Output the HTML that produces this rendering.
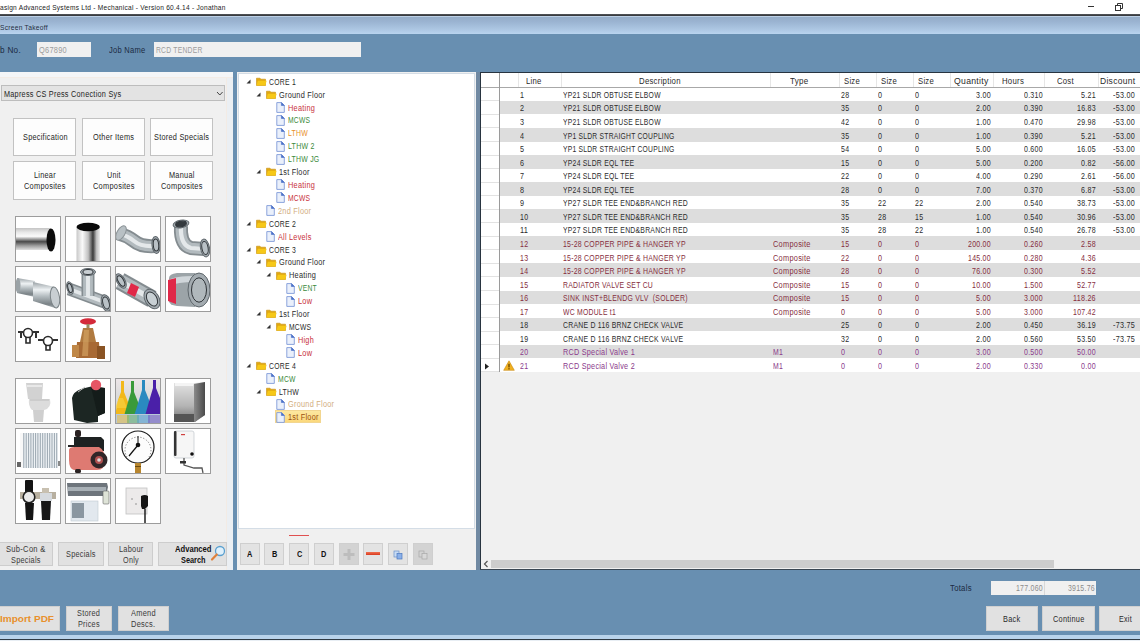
<!DOCTYPE html>
<html><head><meta charset="utf-8"><style>
html,body{margin:0;padding:0;}
body{width:1140px;height:641px;overflow:hidden;position:relative;background:#fff;font-family:"Liberation Sans",sans-serif;}
.t{position:absolute;white-space:pre;line-height:1;transform-origin:0 50%;}
.b{position:absolute;box-sizing:border-box;}
svg{position:absolute;}
</style></head><body>
<div class="b" style="left:0px;top:0px;width:1140px;height:14px;background:#fff"></div>
<div class="t" style="left:-0.50px;top:4.00px;font-size:7.5px;color:#1a1a1a;letter-spacing:0.3px;transform:scaleX(0.876);">asign Advanced Systems Ltd - Mechanical - Version 60.4.14 - Jonathan</div>
<div class="b" style="left:1088px;top:6px;width:6px;height:1px;background:#333"></div>
<svg style="left:1114px;top:2px" width="10" height="10" viewBox="0 0 10 10"><rect x="1.5" y="3.5" width="5" height="5" fill="none" stroke="#333" stroke-width="1"/><path d="M3.5 3.5V1.5H8.5V6.5H6.5" fill="none" stroke="#333" stroke-width="1"/></svg>
<div class="b" style="left:0px;top:14px;width:1140px;height:2px;background:linear-gradient(#55585c,#303236)"></div>
<div class="b" style="left:0px;top:16px;width:1140px;height:18px;background:linear-gradient(#bcd0e6 0px,#bcd0e6 1px,#95adc8 1px,#9bb4d2 6px,#aec8e4 14px,#b9d4ef 18px)"></div>
<div class="t" style="left:-0.50px;top:24.00px;font-size:8px;color:#1f2c40;letter-spacing:0.3px;transform:scaleX(0.834);">Screen Takeoff</div>
<div class="b" style="left:0px;top:34px;width:1140px;height:601px;background:#688fb1"></div>
<div class="b" style="left:0px;top:635px;width:1140px;height:4px;background:#b9d3eb"></div>
<div class="b" style="left:0px;top:639px;width:1140px;height:1px;background:#2f3a44"></div>
<div class="b" style="left:0px;top:640px;width:1140px;height:1px;background:#e8eef4"></div>
<div class="t" style="left:-0.50px;top:46.00px;font-size:8.5px;color:#1b2a42;letter-spacing:0.3px;transform:scaleX(0.962);">b No.</div>
<div class="b" style="left:37px;top:42px;width:54px;height:15px;background:#f0f0f0"></div>
<div class="t" style="left:38.70px;top:46.00px;font-size:8.5px;color:#9c9c9c;letter-spacing:0.3px;transform:scaleX(0.873);">Q67890</div>
<div class="t" style="left:108.70px;top:46.00px;font-size:8.5px;color:#1b2a42;letter-spacing:0.3px;transform:scaleX(0.889);">Job Name</div>
<div class="b" style="left:153.5px;top:42px;width:207.5px;height:15px;background:#f0f0f0"></div>
<div class="t" style="left:155.60px;top:46.00px;font-size:8.5px;color:#9c9c9c;letter-spacing:0.3px;transform:scaleX(0.795);">RCD TENDER</div>
<div class="b" style="left:0px;top:72px;width:233px;height:498px;background:#f0f0f0"></div>
<div class="b" style="left:0px;top:72px;width:233px;height:5px;background:#f4f6f8"></div>
<div class="b" style="left:0px;top:77px;width:233px;height:1px;background:#f3ece6"></div>
<div class="b" style="left:226px;top:78px;width:1px;height:492px;background:#f3ebe4"></div>
<div class="b" style="left:227px;top:78px;width:6px;height:492px;background:#ebeff3"></div>
<div class="b" style="left:1.2px;top:85.2px;width:223.8px;height:15.6px;background:#e3e3e3;border:1px solid #bdbdbd"></div>
<div class="t" style="left:3.60px;top:90.00px;font-size:8.5px;color:#1e1e1e;letter-spacing:0.3px;transform:scaleX(0.856);">Mapress CS Press Conection Sys</div>
<svg style="left:216px;top:90px" width="8" height="7" viewBox="0 0 8 7"><path d="M1 2L3.8 5L6.6 2" fill="none" stroke="#444" stroke-width="1"/></svg>
<div class="b" style="left:13.2px;top:118.1px;width:63px;height:38.3px;background:#fdfdfd;border:1.5px solid #c2c2c2"></div>
<div class="t" style="left:22.64px;top:133.00px;font-size:8.5px;color:#262626;letter-spacing:0.3px;transform:scaleX(0.862);">Specification</div>
<div class="b" style="left:81.6px;top:118.1px;width:63px;height:38.3px;background:#fdfdfd;border:1.5px solid #c2c2c2"></div>
<div class="t" style="left:92.84px;top:133.00px;font-size:8.5px;color:#262626;letter-spacing:0.3px;transform:scaleX(0.865);">Other Items</div>
<div class="b" style="left:150.0px;top:118.1px;width:63px;height:38.3px;background:#fdfdfd;border:1.5px solid #c2c2c2"></div>
<div class="t" style="left:154.27px;top:133.00px;font-size:8.5px;color:#262626;letter-spacing:0.3px;transform:scaleX(0.862);">Stored Specials</div>
<div class="b" style="left:13.2px;top:161.3px;width:63px;height:38.3px;background:#fdfdfd;border:1.5px solid #c2c2c2"></div>
<div class="t" style="left:34.13px;top:171.00px;font-size:8.5px;color:#262626;letter-spacing:0.3px;transform:scaleX(0.861);">Linear</div>
<div class="t" style="left:24.23px;top:182.00px;font-size:8.5px;color:#262626;letter-spacing:0.3px;transform:scaleX(0.871);">Composites</div>
<div class="b" style="left:81.6px;top:161.3px;width:63px;height:38.3px;background:#fdfdfd;border:1.5px solid #c2c2c2"></div>
<div class="t" style="left:106.61px;top:171.00px;font-size:8.5px;color:#262626;letter-spacing:0.3px;transform:scaleX(0.841);">Unit</div>
<div class="t" style="left:92.63px;top:182.00px;font-size:8.5px;color:#262626;letter-spacing:0.3px;transform:scaleX(0.871);">Composites</div>
<div class="b" style="left:150.0px;top:161.3px;width:63px;height:38.3px;background:#fdfdfd;border:1.5px solid #c2c2c2"></div>
<div class="t" style="left:169.07px;top:171.00px;font-size:8.5px;color:#262626;letter-spacing:0.3px;transform:scaleX(0.863);">Manual</div>
<div class="t" style="left:161.03px;top:182.00px;font-size:8.5px;color:#262626;letter-spacing:0.3px;transform:scaleX(0.871);">Composites</div>
<svg width="0" height="0" style="position:absolute"><defs><linearGradient id="mv" x1="0" y1="0" x2="0" y2="1"><stop offset="0" stop-color="#c4c4c4"/><stop offset=".2" stop-color="#e8e8e8"/><stop offset=".38" stop-color="#fafafa"/><stop offset=".62" stop-color="#4a4a4a"/><stop offset=".8" stop-color="#9a9a9a"/><stop offset="1" stop-color="#e0e0e0"/></linearGradient>
<linearGradient id="mh" x1="0" y1="0" x2="1" y2="0"><stop offset="0" stop-color="#c8c8c8"/><stop offset=".25" stop-color="#fafafa"/><stop offset=".5" stop-color="#c0c0c0"/><stop offset=".7" stop-color="#3a3a3a"/><stop offset=".85" stop-color="#bdbdbd"/><stop offset="1" stop-color="#eeeeee"/></linearGradient>
<linearGradient id="mf" x1="0" y1="0" x2="0" y2="1"><stop offset="0" stop-color="#9aa2a6"/><stop offset=".3" stop-color="#eef2f4"/><stop offset=".55" stop-color="#b4bcc0"/><stop offset=".85" stop-color="#7a8286"/><stop offset="1" stop-color="#a8b0b4"/></linearGradient>
<linearGradient id="dw" x1="0" y1="0" x2="0" y2="1"><stop offset="0" stop-color="#e4e4e4"/><stop offset=".6" stop-color="#b4b4b4"/><stop offset="1" stop-color="#707070"/></linearGradient>
<linearGradient id="ds" x1="0" y1="0" x2="1" y2="0"><stop offset="0" stop-color="#8a8a8a"/><stop offset="1" stop-color="#4a4a4a"/></linearGradient>
<linearGradient id="br" x1="0" y1="0" x2="1" y2="0"><stop offset="0" stop-color="#d09058"/><stop offset=".5" stop-color="#a86a34"/><stop offset="1" stop-color="#7a4a20"/></linearGradient>
<linearGradient id="fl" x1="0" y1="0" x2="0" y2="1"><stop offset="0" stop-color="#ece6e8"/><stop offset=".35" stop-color="#dcdcdc"/><stop offset="1" stop-color="#c8d0dc"/></linearGradient></defs></svg>
<div class="b" style="left:15px;top:216px;width:46px;height:46px;background:#fff;border:1px solid #9c9c9c;overflow:hidden"><svg width="44" height="44" viewBox="1 1 44 44" style="left:0;top:0"><rect x="0" y="12" width="36" height="22" fill="url(#mv)"/><ellipse cx="36" cy="24" rx="4.5" ry="11.5" fill="#0c0c0c"/></svg></div>
<div class="b" style="left:65px;top:216px;width:46px;height:46px;background:#fff;border:1px solid #9c9c9c;overflow:hidden"><svg width="44" height="44" viewBox="1 1 44 44" style="left:0;top:0"><rect x="11.5" y="11" width="23.5" height="36" fill="url(#mh)"/><ellipse cx="23.2" cy="11" rx="11.7" ry="4.2" fill="#0a0a0a"/></svg></div>
<div class="b" style="left:115px;top:216px;width:46px;height:46px;background:#fff;border:1px solid #9c9c9c;overflow:hidden"><svg width="44" height="44" viewBox="1 1 44 44" style="left:0;top:0"><path d="M5 18Q13 20 19 25Q26 31 40 30" fill="none" stroke="#848c90" stroke-width="14"/><path d="M5 18Q13 20 19 25Q26 31 40 30" fill="none" stroke="#b2babe" stroke-width="10.5"/><path d="M5 18Q13 20 19 25Q26 31 40 30" fill="none" stroke="#e4e8ea" stroke-width="4.2"/><ellipse cx="6" cy="17" rx="4" ry="8" transform="rotate(30 6 17)" fill="#b8c0c4" stroke="#8a9296"/><ellipse cx="41" cy="29" rx="4" ry="8.5" transform="rotate(-5 41 29)" fill="#a3abb0" stroke="#5f676c" stroke-width="1"/><ellipse cx="41" cy="29" rx="2.7" ry="6.1" transform="rotate(-5 41 29)" fill="#b9c1c6" stroke="#2f3438" stroke-width="1"/></svg></div>
<div class="b" style="left:165px;top:216px;width:46px;height:46px;background:#fff;border:1px solid #9c9c9c;overflow:hidden"><svg width="44" height="44" viewBox="1 1 44 44" style="left:0;top:0"><path d="M16 10Q15 29 26 32L39 33" fill="none" stroke="#848c90" stroke-width="14"/><path d="M16 10Q15 29 26 32L39 33" fill="none" stroke="#b2babe" stroke-width="10.5"/><path d="M16 10Q15 29 26 32L39 33" fill="none" stroke="#e4e8ea" stroke-width="4.2"/><ellipse cx="16" cy="8" rx="8" ry="3.8" transform="rotate(-10 16 8)" fill="#a3abb0" stroke="#5f676c" stroke-width="1"/><ellipse cx="16" cy="8" rx="5.4" ry="2.7" transform="rotate(-10 16 8)" fill="#343a3e" stroke="#2f3438" stroke-width="1"/><ellipse cx="40" cy="32" rx="4.5" ry="9" transform="rotate(-10 40 32)" fill="#a3abb0" stroke="#5f676c" stroke-width="1"/><ellipse cx="40" cy="32" rx="3.1" ry="6.5" transform="rotate(-10 40 32)" fill="#b9c1c6" stroke="#2f3438" stroke-width="1"/></svg></div>
<div class="b" style="left:15px;top:266px;width:46px;height:46px;background:#fff;border:1px solid #9c9c9c;overflow:hidden"><svg width="44" height="44" viewBox="1 1 44 44" style="left:0;top:0"><path d="M2 12L20 15V31L2 27Z" fill="url(#mf)"/><ellipse cx="3" cy="19.5" rx="2.5" ry="7.5" fill="#9aa2a6"/><path d="M18 16L40 21V42L18 35Z" fill="url(#mf)"/><ellipse cx="40" cy="31.5" rx="4.5" ry="10.5" transform="rotate(-8 40 31.5)" fill="#c8ced2" stroke="#7a8286" stroke-width="1"/></svg></div>
<div class="b" style="left:65px;top:266px;width:46px;height:46px;background:#fff;border:1px solid #9c9c9c;overflow:hidden"><svg width="44" height="44" viewBox="1 1 44 44" style="left:0;top:0"><path d="M4 23L42 37" fill="none" stroke="#848c90" stroke-width="13"/><path d="M4 23L42 37" fill="none" stroke="#b2babe" stroke-width="9.8"/><path d="M4 23L42 37" fill="none" stroke="#e4e8ea" stroke-width="3.9"/><path d="M23 6V30" fill="none" stroke="#848c90" stroke-width="13"/><path d="M23 6V30" fill="none" stroke="#b2babe" stroke-width="9.8"/><path d="M23 6V30" fill="none" stroke="#e4e8ea" stroke-width="3.9"/><ellipse cx="23" cy="6" rx="7.5" ry="3.5" transform="rotate(0 23 6)" fill="#a3abb0" stroke="#5f676c" stroke-width="1"/><ellipse cx="23" cy="6" rx="5.1" ry="2.5" transform="rotate(0 23 6)" fill="#c8ced2" stroke="#2f3438" stroke-width="1"/><ellipse cx="41" cy="37" rx="4.5" ry="8.5" transform="rotate(-15 41 37)" fill="#a3abb0" stroke="#5f676c" stroke-width="1"/><ellipse cx="41" cy="37" rx="3.1" ry="6.1" transform="rotate(-15 41 37)" fill="#b9c1c6" stroke="#2f3438" stroke-width="1"/><ellipse cx="5" cy="22" rx="3" ry="6.5" transform="rotate(-15 5 22)" fill="#a3abb0" stroke="#5f676c" stroke-width="1"/><ellipse cx="5" cy="22" rx="2.0" ry="4.7" transform="rotate(-15 5 22)" fill="#b9c1c6" stroke="#2f3438" stroke-width="1"/></svg></div>
<div class="b" style="left:115px;top:266px;width:46px;height:46px;background:#fff;border:1px solid #9c9c9c;overflow:hidden"><svg width="44" height="44" viewBox="1 1 44 44" style="left:0;top:0"><path d="M5 15L37 33" fill="none" stroke="#848c90" stroke-width="18"/><path d="M5 15L37 33" fill="none" stroke="#b2babe" stroke-width="13.5"/><path d="M5 15L37 33" fill="none" stroke="#e4e8ea" stroke-width="5.4"/><path d="M16 17L24 21L20 31L12 27Z" fill="#e02848"/><ellipse cx="37" cy="33" rx="7" ry="10.5" transform="rotate(-30 37 33)" fill="#a3abb0" stroke="#5f676c" stroke-width="1"/><ellipse cx="37" cy="33" rx="4.8" ry="7.6" transform="rotate(-30 37 33)" fill="#c8d0d4" stroke="#2f3438" stroke-width="1"/><ellipse cx="6" cy="15" rx="4" ry="8" transform="rotate(-30 6 15)" fill="#a3abb0" stroke="#5f676c" stroke-width="1"/><ellipse cx="6" cy="15" rx="2.7" ry="5.8" transform="rotate(-30 6 15)" fill="#b9c1c6" stroke="#2f3438" stroke-width="1"/></svg></div>
<div class="b" style="left:165px;top:266px;width:46px;height:46px;background:#fff;border:1px solid #9c9c9c;overflow:hidden"><svg width="44" height="44" viewBox="1 1 44 44" style="left:0;top:0"><path d="M4 12Q4 8 12 7L30 7V41L12 40Q4 39 4 35Z" fill="#9ca4a8"/><path d="M4 14Q10 10 30 10V16Q12 16 4 20Z" fill="#d0d6da"/><path d="M3 14L11 12V38L3 35Z" fill="#e02848"/><ellipse cx="34" cy="24" rx="11" ry="17" transform="rotate(0 34 24)" fill="#a3abb0" stroke="#5f676c" stroke-width="1"/><ellipse cx="34" cy="24" rx="7.5" ry="12.2" transform="rotate(0 34 24)" fill="#b0b8bc" stroke="#2f3438" stroke-width="1"/></svg></div>
<div class="b" style="left:15px;top:316px;width:46px;height:46px;background:#fff;border:1px solid #9c9c9c;overflow:hidden"><svg width="44" height="44" viewBox="1 1 44 44" style="left:0;top:0"><g fill="none" stroke="#2a2a2a" stroke-width="1.6"><circle cx="13" cy="17" r="4.5"/><circle cx="33" cy="25" r="4.5"/><path d="M11 21V27H15V21M31 29V34H35V29"/></g><g fill="#333"><path d="M3 15H9V17H3Z"/><path d="M17 15H24V17H17Z"/><path d="M23 23H29V25H23Z"/><path d="M37 23H43V25H37Z"/><rect x="5" y="16" width="2" height="6"/><rect x="20" y="16" width="2" height="6"/></g></svg></div>
<div class="b" style="left:65px;top:316px;width:46px;height:46px;background:#fff;border:1px solid #9c9c9c;overflow:hidden"><svg width="44" height="44" viewBox="1 1 44 44" style="left:0;top:0"><ellipse cx="23" cy="5.5" rx="8" ry="3.2" fill="#d42a3a"/><rect x="21.5" y="8" width="3" height="5" fill="#9a8a60"/><path d="M18 12H28L31 26H15Z" fill="#b07a40"/><path d="M12 26H34L35 42H11Z" fill="#a86a34"/><path d="M7 29H14V41H7Z" fill="#c08848"/><path d="M32 30H40V43H32Z" fill="#8a5424"/><path d="M19 14H24L23 40H17Z" fill="#d8a868" opacity=".6"/></svg></div>
<div class="b" style="left:15px;top:378px;width:46px;height:46px;background:#fff;border:1px solid #9c9c9c;overflow:hidden"><svg width="44" height="44" viewBox="1 1 44 44" style="left:0;top:0"><path d="M11 5H28L27 21H13Z" fill="#d2d2d2"/><path d="M12 7H27V9H12Z" fill="#e8e8e8"/><path d="M14 21H35Q37 30 29 32H17Q13 28 14 21Z" fill="#dcdcdc"/><path d="M15 22H34" stroke="#bcbcbc" stroke-width="1"/><path d="M18 32H29L28 44H19Z" fill="#cfcfcf"/></svg></div>
<div class="b" style="left:65px;top:378px;width:46px;height:46px;background:#fff;border:1px solid #9c9c9c;overflow:hidden"><svg width="44" height="44" viewBox="1 1 44 44" style="left:0;top:0"><path d="M7 20Q8 14 16 11L28 8L40 10V35L33 38V44L22 45L9 42Z" fill="#1c2623"/><path d="M26 9L40 10V35L33 38Z" fill="#141c1a"/><circle cx="31" cy="7" r="5.2" fill="#e55565"/><path d="M13 14L20 9" stroke="#bbb" stroke-width="1"/></svg></div>
<div class="b" style="left:115px;top:378px;width:46px;height:46px;background:#fff;border:1px solid #9c9c9c;overflow:hidden"><svg width="44" height="44" viewBox="1 1 44 44" style="left:0;top:0"><rect x="1" y="1" width="45" height="45" fill="url(#fl)"/><path d="M0 38L3 22L6 14V3H9V14L13 24L15 38Z" fill="#f2b81a"/><path d="M0 30L4 20H8L12 30Z" fill="#f8d040" opacity=".7"/><path d="M9 38L13 24L16 14V3H19V14L23 24L26 38Z" fill="#3a9a3a"/><path d="M19 38L24 22L27 12V2H30V12L34 22L37 38Z" fill="#2a8ac0"/><path d="M30 38L35 20L38 10V2H41V10L45 20V38Z" fill="#4a20a8"/><rect x="0" y="36" width="46" height="10" fill="#b8c8d8"/><path d="M2 37H14V45H2Z" fill="#e8c050" opacity=".6"/><path d="M12 37H24V45H12Z" fill="#60b060" opacity=".5"/><path d="M22 37H35V45H22Z" fill="#50a0d0" opacity=".5"/><path d="M33 37H46V45H33Z" fill="#7050c0" opacity=".5"/></svg></div>
<div class="b" style="left:165px;top:378px;width:46px;height:46px;background:#fff;border:1px solid #9c9c9c;overflow:hidden"><svg width="44" height="44" viewBox="1 1 44 44" style="left:0;top:0"><path d="M9 5H30L40 4V37L30 44H9Z" fill="url(#dw)"/><path d="M29 6L40 4V37L29 44Z" fill="url(#ds)"/><rect x="9" y="36" width="20" height="8" fill="#555"/><path d="M10 5H29L28 8H10Z" fill="#f4f4f4"/></svg></div>
<div class="b" style="left:15px;top:428px;width:46px;height:46px;background:#fff;border:1px solid #9c9c9c;overflow:hidden"><svg width="44" height="44" viewBox="1 1 44 44" style="left:0;top:0"><rect x="5" y="5" width="38" height="35" fill="#eef2f5"/><rect x="6.0" y="5" width="1" height="35" fill="#9aa6b0"/><rect x="8.3" y="5" width="1" height="35" fill="#9aa6b0"/><rect x="10.7" y="5" width="1" height="35" fill="#9aa6b0"/><rect x="13.1" y="5" width="1" height="35" fill="#9aa6b0"/><rect x="15.4" y="5" width="1" height="35" fill="#9aa6b0"/><rect x="17.8" y="5" width="1" height="35" fill="#9aa6b0"/><rect x="20.1" y="5" width="1" height="35" fill="#9aa6b0"/><rect x="22.4" y="5" width="1" height="35" fill="#9aa6b0"/><rect x="24.8" y="5" width="1" height="35" fill="#9aa6b0"/><rect x="27.2" y="5" width="1" height="35" fill="#9aa6b0"/><rect x="29.5" y="5" width="1" height="35" fill="#9aa6b0"/><rect x="31.9" y="5" width="1" height="35" fill="#9aa6b0"/><rect x="34.2" y="5" width="1" height="35" fill="#9aa6b0"/><rect x="36.5" y="5" width="1" height="35" fill="#9aa6b0"/><rect x="38.9" y="5" width="1" height="35" fill="#9aa6b0"/><rect x="41.2" y="5" width="1" height="35" fill="#9aa6b0"/><rect x="5" y="5" width="3" height="35" fill="#f8f8f8"/><rect x="2" y="34" width="4" height="5" fill="#666"/><rect x="43" y="33" width="2" height="5" fill="#888"/></svg></div>
<div class="b" style="left:65px;top:428px;width:46px;height:46px;background:#fff;border:1px solid #9c9c9c;overflow:hidden"><svg width="44" height="44" viewBox="1 1 44 44" style="left:0;top:0"><rect x="10" y="2" width="6" height="7" rx="2" fill="#2a2222"/><path d="M9 9H36L39 12V23H9Z" fill="#1e2222"/><path d="M3 17H12V19H3Z" fill="#222"/><path d="M4 22Q4 19 10 19H34Q40 22 40 32Q40 42 32 42H9Q4 41 4 32Z" fill="#de7a72"/><circle cx="34" cy="32" r="8.5" fill="#302628"/><circle cx="34" cy="32" r="4" fill="#b05050"/><circle cx="34" cy="32" r="1.8" fill="#ddd"/><rect x="10" y="41" width="6" height="4" rx="1.5" fill="#2a2222"/></svg></div>
<div class="b" style="left:115px;top:428px;width:46px;height:46px;background:#fff;border:1px solid #9c9c9c;overflow:hidden"><svg width="44" height="44" viewBox="1 1 44 44" style="left:0;top:0"><circle cx="23" cy="19" r="16" fill="#fcfcfc" stroke="#1a1a1a" stroke-width="1.2"/><g stroke="#444" stroke-width=".8" fill="none"><path d="M12 29A13 13 0 1 1 34 29" stroke-dasharray="1 2"/></g><path d="M23 17L14 28" stroke="#111" stroke-width="1.2"/><path d="M23 17V8" stroke="#111" stroke-width="1"/><circle cx="23" cy="17" r="2.3" fill="#111"/><rect x="20" y="35" width="6" height="10" fill="#b8862e"/><rect x="20" y="38" width="6" height="1" fill="#6a4a10"/></svg></div>
<div class="b" style="left:165px;top:428px;width:46px;height:46px;background:#fff;border:1px solid #9c9c9c;overflow:hidden"><svg width="44" height="44" viewBox="1 1 44 44" style="left:0;top:0"><rect x="9" y="3" width="20" height="27" rx="2" fill="#f6f6f6" stroke="#c8cdd2" stroke-width=".8"/><rect x="9" y="3" width="2.5" height="25" rx="1" fill="#333"/><circle cx="27" cy="26" r="1.8" fill="#111"/><rect x="16" y="6" width="4" height="1.2" fill="#d04040"/><path d="M19 30V37L29 40H37L38 45" fill="none" stroke="#555" stroke-width="1.3"/><rect x="15" y="33" width="6" height="2.5" fill="#333"/></svg></div>
<div class="b" style="left:15px;top:478px;width:46px;height:46px;background:#fff;border:1px solid #9c9c9c;overflow:hidden"><svg width="44" height="44" viewBox="1 1 44 44" style="left:0;top:0"><rect x="5" y="14" width="36" height="7" fill="#b8b0a0"/><rect x="10" y="2" width="8" height="14" rx="1" fill="#141414"/><circle cx="14" cy="19" r="5.8" fill="#eaeaea" stroke="#222" stroke-width="1.6"/><path d="M10 25H19L18 42H11Z" fill="#141414"/><rect x="27" y="10" width="7" height="6" fill="#c8c0b0"/><rect x="25" y="15" width="12" height="8" fill="#d6dade"/><path d="M26 23H36L35 42H27Z" fill="#161616"/></svg></div>
<div class="b" style="left:65px;top:478px;width:46px;height:46px;background:#fff;border:1px solid #9c9c9c;overflow:hidden"><svg width="44" height="44" viewBox="1 1 44 44" style="left:0;top:0"><path d="M2 5H42L43 9L41 18H3Z" fill="#6e757c"/><rect x="3" y="9" width="38" height="4" fill="#a8b0b6"/><rect x="38" y="13" width="6" height="13" rx="1" fill="#dfe4d8" stroke="#666" stroke-width=".6"/><rect x="6" y="23" width="27" height="20" fill="#e2e8ee" stroke="#c0c8d0" stroke-width=".6"/><rect x="7" y="25" width="12" height="15" fill="#8a96a0"/></svg></div>
<div class="b" style="left:115px;top:478px;width:46px;height:46px;background:#fff;border:1px solid #9c9c9c;overflow:hidden"><svg width="44" height="44" viewBox="1 1 44 44" style="left:0;top:0"><rect x="11" y="10" width="21" height="26" fill="#eceaea" stroke="#c0c0c0" stroke-width=".8"/><path d="M26 18Q30 16 33 18V28L30 31H27L26 28Z" fill="#151515"/><path d="M30 31V46" stroke="#111" stroke-width="1.4"/><circle cx="17" cy="21" r=".8" fill="#888"/><circle cx="21" cy="26" r=".8" fill="#888"/></svg></div>
<div class="b" style="left:-2px;top:542.3px;width:54.6px;height:24.2px;background:#e1e1e1;border:1px solid #cdcdcd"></div>
<div class="t" style="left:5.65px;top:545.00px;font-size:8.5px;color:#3a3a3a;letter-spacing:0.3px;transform:scaleX(0.894);">Sub-Con &amp;</div>
<div class="t" style="left:10.54px;top:556.00px;font-size:8.5px;color:#3a3a3a;letter-spacing:0.3px;transform:scaleX(0.862);">Specials</div>
<div class="b" style="left:58.3px;top:542.3px;width:45.3px;height:24.2px;background:#e1e1e1;border:1px solid #cdcdcd"></div>
<div class="t" style="left:66.19px;top:550.00px;font-size:8.5px;color:#3a3a3a;letter-spacing:0.3px;transform:scaleX(0.862);">Specials</div>
<div class="b" style="left:108.4px;top:542.3px;width:45px;height:24.2px;background:#e1e1e1;border:1px solid #cdcdcd"></div>
<div class="t" style="left:118.75px;top:545.00px;font-size:8.5px;color:#3a3a3a;letter-spacing:0.3px;transform:scaleX(0.869);">Labour</div>
<div class="t" style="left:123.08px;top:556.00px;font-size:8.5px;color:#3a3a3a;letter-spacing:0.3px;transform:scaleX(0.851);">Only</div>
<div class="b" style="left:158.3px;top:542.3px;width:69px;height:24.2px;background:#e1e1e1;border:1px solid #cdcdcd"></div>
<div class="t" style="left:174.75px;top:545.00px;font-size:8.5px;color:#111;font-weight:bold;transform:scaleX(0.899);">Advanced</div>
<div class="t" style="left:180.75px;top:556.00px;font-size:8.5px;color:#111;font-weight:bold;transform:scaleX(0.864);">Search</div>
<svg style="left:209px;top:543px" width="18" height="20" viewBox="0 0 18 20"><circle cx="11" cy="8" r="4.5" fill="#dff0fb" stroke="#5aa0d0" stroke-width="1.3"/><path d="M7.8 11.5L3 16.5" stroke="#e0803a" stroke-width="2.2" stroke-linecap="round"/></svg>
<div class="b" style="left:237px;top:72px;width:239px;height:498px;background:#f0f0f0"></div>
<div class="b" style="left:238px;top:73px;width:237px;height:456px;background:#fff;border:1px solid #d4dde6"></div>
<svg style="left:245.5px;top:78.7px" width="5" height="5" viewBox="0 0 5 5"><path d="M4.5 0.5V4.5H0.5Z" fill="#333"/></svg>
<svg style="left:256px;top:77.0px" width="11" height="9" viewBox="0 0 11 9"><path d="M0.5 1.2H4L5 2.2H9.5V8.5H0.5Z" fill="#e0a810" stroke="#c89010" stroke-width=".6"/><path d="M1.8 3.8H10.6L9.4 8.5H0.5Z" fill="#f6c818"/></svg>
<div class="t" style="left:268.50px;top:78.00px;font-size:8.5px;color:#2a2a2a;letter-spacing:0.3px;transform:scaleX(0.806);">CORE 1</div>
<svg style="left:255.5px;top:91.61px" width="5" height="5" viewBox="0 0 5 5"><path d="M4.5 0.5V4.5H0.5Z" fill="#333"/></svg>
<svg style="left:266px;top:89.91px" width="11" height="9" viewBox="0 0 11 9"><path d="M0.5 1.2H4L5 2.2H9.5V8.5H0.5Z" fill="#e0a810" stroke="#c89010" stroke-width=".6"/><path d="M1.8 3.8H10.6L9.4 8.5H0.5Z" fill="#f6c818"/></svg>
<div class="t" style="left:278.50px;top:91.00px;font-size:8.5px;color:#2a2a2a;letter-spacing:0.3px;transform:scaleX(0.862);">Ground Floor</div>
<svg style="left:276px;top:101.92px" width="9" height="11" viewBox="0 0 9 11"><path d="M0.8 0.6H5.6L8.3 3.3V10.4H0.8Z" fill="#eaf0fb" stroke="#7f9ad8" stroke-width=".9"/><path d="M5.4 0.6V3.5H8.3Z" fill="#4a70c8" stroke="#4a70c8" stroke-width=".6"/></svg>
<div class="t" style="left:288.30px;top:104.00px;font-size:8.5px;color:#c8303c;letter-spacing:0.3px;transform:scaleX(0.862);">Heating</div>
<svg style="left:276px;top:114.83px" width="9" height="11" viewBox="0 0 9 11"><path d="M0.8 0.6H5.6L8.3 3.3V10.4H0.8Z" fill="#eaf0fb" stroke="#7f9ad8" stroke-width=".9"/><path d="M5.4 0.6V3.5H8.3Z" fill="#4a70c8" stroke="#4a70c8" stroke-width=".6"/></svg>
<div class="t" style="left:288.30px;top:116.00px;font-size:8.5px;color:#3a8a3a;letter-spacing:0.3px;transform:scaleX(0.793);">MCWS</div>
<svg style="left:276px;top:127.74px" width="9" height="11" viewBox="0 0 9 11"><path d="M0.8 0.6H5.6L8.3 3.3V10.4H0.8Z" fill="#eaf0fb" stroke="#7f9ad8" stroke-width=".9"/><path d="M5.4 0.6V3.5H8.3Z" fill="#4a70c8" stroke="#4a70c8" stroke-width=".6"/></svg>
<div class="t" style="left:288.30px;top:129.00px;font-size:8.5px;color:#e8902a;letter-spacing:0.3px;transform:scaleX(0.811);">LTHW</div>
<svg style="left:276px;top:140.65px" width="9" height="11" viewBox="0 0 9 11"><path d="M0.8 0.6H5.6L8.3 3.3V10.4H0.8Z" fill="#eaf0fb" stroke="#7f9ad8" stroke-width=".9"/><path d="M5.4 0.6V3.5H8.3Z" fill="#4a70c8" stroke="#4a70c8" stroke-width=".6"/></svg>
<div class="t" style="left:288.30px;top:142.00px;font-size:8.5px;color:#3a8a3a;letter-spacing:0.3px;transform:scaleX(0.822);">LTHW 2</div>
<svg style="left:276px;top:153.56px" width="9" height="11" viewBox="0 0 9 11"><path d="M0.8 0.6H5.6L8.3 3.3V10.4H0.8Z" fill="#eaf0fb" stroke="#7f9ad8" stroke-width=".9"/><path d="M5.4 0.6V3.5H8.3Z" fill="#4a70c8" stroke="#4a70c8" stroke-width=".6"/></svg>
<div class="t" style="left:288.30px;top:155.00px;font-size:8.5px;color:#3a8a3a;letter-spacing:0.3px;transform:scaleX(0.812);">LTHW JG</div>
<svg style="left:255.5px;top:169.07000000000002px" width="5" height="5" viewBox="0 0 5 5"><path d="M4.5 0.5V4.5H0.5Z" fill="#333"/></svg>
<svg style="left:266px;top:167.37px" width="11" height="9" viewBox="0 0 11 9"><path d="M0.5 1.2H4L5 2.2H9.5V8.5H0.5Z" fill="#e0a810" stroke="#c89010" stroke-width=".6"/><path d="M1.8 3.8H10.6L9.4 8.5H0.5Z" fill="#f6c818"/></svg>
<div class="t" style="left:278.50px;top:168.00px;font-size:8.5px;color:#2a2a2a;letter-spacing:0.3px;transform:scaleX(0.856);">1st Floor</div>
<svg style="left:276px;top:179.38px" width="9" height="11" viewBox="0 0 9 11"><path d="M0.8 0.6H5.6L8.3 3.3V10.4H0.8Z" fill="#eaf0fb" stroke="#7f9ad8" stroke-width=".9"/><path d="M5.4 0.6V3.5H8.3Z" fill="#4a70c8" stroke="#4a70c8" stroke-width=".6"/></svg>
<div class="t" style="left:288.30px;top:181.00px;font-size:8.5px;color:#c8303c;letter-spacing:0.3px;transform:scaleX(0.862);">Heating</div>
<svg style="left:276px;top:192.29000000000002px" width="9" height="11" viewBox="0 0 9 11"><path d="M0.8 0.6H5.6L8.3 3.3V10.4H0.8Z" fill="#eaf0fb" stroke="#7f9ad8" stroke-width=".9"/><path d="M5.4 0.6V3.5H8.3Z" fill="#4a70c8" stroke="#4a70c8" stroke-width=".6"/></svg>
<div class="t" style="left:288.30px;top:194.00px;font-size:8.5px;color:#c8303c;letter-spacing:0.3px;transform:scaleX(0.793);">MCWS</div>
<svg style="left:266px;top:205.2px" width="9" height="11" viewBox="0 0 9 11"><path d="M0.8 0.6H5.6L8.3 3.3V10.4H0.8Z" fill="#eaf0fb" stroke="#7f9ad8" stroke-width=".9"/><path d="M5.4 0.6V3.5H8.3Z" fill="#4a70c8" stroke="#4a70c8" stroke-width=".6"/></svg>
<div class="t" style="left:278.30px;top:207.00px;font-size:8.5px;color:#d2ae80;letter-spacing:0.3px;transform:scaleX(0.863);">2nd Floor</div>
<svg style="left:245.5px;top:220.71px" width="5" height="5" viewBox="0 0 5 5"><path d="M4.5 0.5V4.5H0.5Z" fill="#333"/></svg>
<svg style="left:256px;top:219.01px" width="11" height="9" viewBox="0 0 11 9"><path d="M0.5 1.2H4L5 2.2H9.5V8.5H0.5Z" fill="#e0a810" stroke="#c89010" stroke-width=".6"/><path d="M1.8 3.8H10.6L9.4 8.5H0.5Z" fill="#f6c818"/></svg>
<div class="t" style="left:268.50px;top:220.00px;font-size:8.5px;color:#2a2a2a;letter-spacing:0.3px;transform:scaleX(0.806);">CORE 2</div>
<svg style="left:266px;top:231.02000000000004px" width="9" height="11" viewBox="0 0 9 11"><path d="M0.8 0.6H5.6L8.3 3.3V10.4H0.8Z" fill="#eaf0fb" stroke="#7f9ad8" stroke-width=".9"/><path d="M5.4 0.6V3.5H8.3Z" fill="#4a70c8" stroke="#4a70c8" stroke-width=".6"/></svg>
<div class="t" style="left:278.30px;top:233.00px;font-size:8.5px;color:#c8303c;letter-spacing:0.3px;transform:scaleX(0.852);">All Levels</div>
<svg style="left:245.5px;top:246.53px" width="5" height="5" viewBox="0 0 5 5"><path d="M4.5 0.5V4.5H0.5Z" fill="#333"/></svg>
<svg style="left:256px;top:244.82999999999998px" width="11" height="9" viewBox="0 0 11 9"><path d="M0.5 1.2H4L5 2.2H9.5V8.5H0.5Z" fill="#e0a810" stroke="#c89010" stroke-width=".6"/><path d="M1.8 3.8H10.6L9.4 8.5H0.5Z" fill="#f6c818"/></svg>
<div class="t" style="left:268.50px;top:246.00px;font-size:8.5px;color:#2a2a2a;letter-spacing:0.3px;transform:scaleX(0.806);">CORE 3</div>
<svg style="left:255.5px;top:259.44px" width="5" height="5" viewBox="0 0 5 5"><path d="M4.5 0.5V4.5H0.5Z" fill="#333"/></svg>
<svg style="left:266px;top:257.74px" width="11" height="9" viewBox="0 0 11 9"><path d="M0.5 1.2H4L5 2.2H9.5V8.5H0.5Z" fill="#e0a810" stroke="#c89010" stroke-width=".6"/><path d="M1.8 3.8H10.6L9.4 8.5H0.5Z" fill="#f6c818"/></svg>
<div class="t" style="left:278.50px;top:258.00px;font-size:8.5px;color:#2a2a2a;letter-spacing:0.3px;transform:scaleX(0.862);">Ground Floor</div>
<svg style="left:265.5px;top:272.34999999999997px" width="5" height="5" viewBox="0 0 5 5"><path d="M4.5 0.5V4.5H0.5Z" fill="#333"/></svg>
<svg style="left:276px;top:270.65px" width="11" height="9" viewBox="0 0 11 9"><path d="M0.5 1.2H4L5 2.2H9.5V8.5H0.5Z" fill="#e0a810" stroke="#c89010" stroke-width=".6"/><path d="M1.8 3.8H10.6L9.4 8.5H0.5Z" fill="#f6c818"/></svg>
<div class="t" style="left:288.50px;top:271.00px;font-size:8.5px;color:#2a2a2a;letter-spacing:0.3px;transform:scaleX(0.862);">Heating</div>
<svg style="left:286px;top:282.66px" width="9" height="11" viewBox="0 0 9 11"><path d="M0.8 0.6H5.6L8.3 3.3V10.4H0.8Z" fill="#eaf0fb" stroke="#7f9ad8" stroke-width=".9"/><path d="M5.4 0.6V3.5H8.3Z" fill="#4a70c8" stroke="#4a70c8" stroke-width=".6"/></svg>
<div class="t" style="left:298.30px;top:284.00px;font-size:8.5px;color:#3a8a3a;letter-spacing:0.3px;transform:scaleX(0.789);">VENT</div>
<svg style="left:286px;top:295.57px" width="9" height="11" viewBox="0 0 9 11"><path d="M0.8 0.6H5.6L8.3 3.3V10.4H0.8Z" fill="#eaf0fb" stroke="#7f9ad8" stroke-width=".9"/><path d="M5.4 0.6V3.5H8.3Z" fill="#4a70c8" stroke="#4a70c8" stroke-width=".6"/></svg>
<div class="t" style="left:298.30px;top:297.00px;font-size:8.5px;color:#c8303c;letter-spacing:0.3px;transform:scaleX(0.870);">Low</div>
<svg style="left:255.5px;top:311.08px" width="5" height="5" viewBox="0 0 5 5"><path d="M4.5 0.5V4.5H0.5Z" fill="#333"/></svg>
<svg style="left:266px;top:309.38px" width="11" height="9" viewBox="0 0 11 9"><path d="M0.5 1.2H4L5 2.2H9.5V8.5H0.5Z" fill="#e0a810" stroke="#c89010" stroke-width=".6"/><path d="M1.8 3.8H10.6L9.4 8.5H0.5Z" fill="#f6c818"/></svg>
<div class="t" style="left:278.50px;top:310.00px;font-size:8.5px;color:#2a2a2a;letter-spacing:0.3px;transform:scaleX(0.856);">1st Floor</div>
<svg style="left:265.5px;top:323.98999999999995px" width="5" height="5" viewBox="0 0 5 5"><path d="M4.5 0.5V4.5H0.5Z" fill="#333"/></svg>
<svg style="left:276px;top:322.28999999999996px" width="11" height="9" viewBox="0 0 11 9"><path d="M0.5 1.2H4L5 2.2H9.5V8.5H0.5Z" fill="#e0a810" stroke="#c89010" stroke-width=".6"/><path d="M1.8 3.8H10.6L9.4 8.5H0.5Z" fill="#f6c818"/></svg>
<div class="t" style="left:288.50px;top:323.00px;font-size:8.5px;color:#2a2a2a;letter-spacing:0.3px;transform:scaleX(0.793);">MCWS</div>
<svg style="left:286px;top:334.3px" width="9" height="11" viewBox="0 0 9 11"><path d="M0.8 0.6H5.6L8.3 3.3V10.4H0.8Z" fill="#eaf0fb" stroke="#7f9ad8" stroke-width=".9"/><path d="M5.4 0.6V3.5H8.3Z" fill="#4a70c8" stroke="#4a70c8" stroke-width=".6"/></svg>
<div class="t" style="left:298.30px;top:336.00px;font-size:8.5px;color:#c8303c;letter-spacing:0.3px;transform:scaleX(0.854);">High</div>
<svg style="left:286px;top:347.21000000000004px" width="9" height="11" viewBox="0 0 9 11"><path d="M0.8 0.6H5.6L8.3 3.3V10.4H0.8Z" fill="#eaf0fb" stroke="#7f9ad8" stroke-width=".9"/><path d="M5.4 0.6V3.5H8.3Z" fill="#4a70c8" stroke="#4a70c8" stroke-width=".6"/></svg>
<div class="t" style="left:298.30px;top:349.00px;font-size:8.5px;color:#c8303c;letter-spacing:0.3px;transform:scaleX(0.870);">Low</div>
<svg style="left:245.5px;top:362.71999999999997px" width="5" height="5" viewBox="0 0 5 5"><path d="M4.5 0.5V4.5H0.5Z" fill="#333"/></svg>
<svg style="left:256px;top:361.02px" width="11" height="9" viewBox="0 0 11 9"><path d="M0.5 1.2H4L5 2.2H9.5V8.5H0.5Z" fill="#e0a810" stroke="#c89010" stroke-width=".6"/><path d="M1.8 3.8H10.6L9.4 8.5H0.5Z" fill="#f6c818"/></svg>
<div class="t" style="left:268.50px;top:362.00px;font-size:8.5px;color:#2a2a2a;letter-spacing:0.3px;transform:scaleX(0.806);">CORE 4</div>
<svg style="left:266px;top:373.03000000000003px" width="9" height="11" viewBox="0 0 9 11"><path d="M0.8 0.6H5.6L8.3 3.3V10.4H0.8Z" fill="#eaf0fb" stroke="#7f9ad8" stroke-width=".9"/><path d="M5.4 0.6V3.5H8.3Z" fill="#4a70c8" stroke="#4a70c8" stroke-width=".6"/></svg>
<div class="t" style="left:278.30px;top:375.00px;font-size:8.5px;color:#3a8a3a;letter-spacing:0.3px;transform:scaleX(0.797);">MCW</div>
<svg style="left:255.5px;top:388.54px" width="5" height="5" viewBox="0 0 5 5"><path d="M4.5 0.5V4.5H0.5Z" fill="#333"/></svg>
<svg style="left:266px;top:386.84000000000003px" width="11" height="9" viewBox="0 0 11 9"><path d="M0.5 1.2H4L5 2.2H9.5V8.5H0.5Z" fill="#e0a810" stroke="#c89010" stroke-width=".6"/><path d="M1.8 3.8H10.6L9.4 8.5H0.5Z" fill="#f6c818"/></svg>
<div class="t" style="left:278.50px;top:388.00px;font-size:8.5px;color:#2a2a2a;letter-spacing:0.3px;transform:scaleX(0.811);">LTHW</div>
<svg style="left:276px;top:398.85px" width="9" height="11" viewBox="0 0 9 11"><path d="M0.8 0.6H5.6L8.3 3.3V10.4H0.8Z" fill="#eaf0fb" stroke="#7f9ad8" stroke-width=".9"/><path d="M5.4 0.6V3.5H8.3Z" fill="#4a70c8" stroke="#4a70c8" stroke-width=".6"/></svg>
<div class="t" style="left:288.30px;top:400.00px;font-size:8.5px;color:#d2ae80;letter-spacing:0.3px;transform:scaleX(0.862);">Ground Floor</div>
<div class="b" style="left:275px;top:409.96000000000004px;width:46px;height:13.2px;background:linear-gradient(#fde8a0,#fbd87c);border:1px solid #f2d690"></div>
<svg style="left:276px;top:411.76000000000005px" width="9" height="11" viewBox="0 0 9 11"><path d="M0.8 0.6H5.6L8.3 3.3V10.4H0.8Z" fill="#eaf0fb" stroke="#7f9ad8" stroke-width=".9"/><path d="M5.4 0.6V3.5H8.3Z" fill="#4a70c8" stroke="#4a70c8" stroke-width=".6"/></svg>
<div class="t" style="left:288.30px;top:413.00px;font-size:8.5px;color:#9a5010;letter-spacing:0.3px;transform:scaleX(0.856);">1st Floor</div>
<div class="b" style="left:289px;top:535px;width:20px;height:1px;background:#e05050"></div>
<div class="b" style="left:239.9px;top:542.8px;width:20px;height:22.7px;background:#e3e3e3;border:1px solid #cfcfcf"></div>
<div class="t" style="left:247.24px;top:550.00px;font-size:9px;color:#111;font-weight:bold;transform:scaleX(0.820);">A</div>
<div class="b" style="left:264.2px;top:542.8px;width:20px;height:22.7px;background:#e3e3e3;border:1px solid #cfcfcf"></div>
<div class="t" style="left:271.54px;top:550.00px;font-size:9px;color:#111;font-weight:bold;transform:scaleX(0.820);">B</div>
<div class="b" style="left:289.2px;top:542.8px;width:20px;height:22.7px;background:#e3e3e3;border:1px solid #cfcfcf"></div>
<div class="t" style="left:296.54px;top:550.00px;font-size:9px;color:#111;font-weight:bold;transform:scaleX(0.820);">C</div>
<div class="b" style="left:313.5px;top:542.8px;width:20px;height:22.7px;background:#e3e3e3;border:1px solid #cfcfcf"></div>
<div class="t" style="left:320.84px;top:550.00px;font-size:9px;color:#111;font-weight:bold;transform:scaleX(0.820);">D</div>
<div class="b" style="left:338.5px;top:542.8px;width:20px;height:22.7px;background:#d3d3d3;border:1px solid #cfcfcf"></div>
<div class="b" style="left:363.2px;top:542.8px;width:20px;height:22.7px;background:#e3e3e3;border:1px solid #cfcfcf"></div>
<div class="b" style="left:387.9px;top:542.8px;width:20px;height:22.7px;background:#e3e3e3;border:1px solid #cfcfcf"></div>
<div class="b" style="left:412.9px;top:542.8px;width:20px;height:22.7px;background:#d3d3d3;border:1px solid #cfcfcf"></div>
<svg style="left:338.5px;top:542.8px" width="20" height="23" viewBox="0 0 20 23"><path d="M10 6V17M4.5 11.5H15.5" stroke="#bdbdbd" stroke-width="3"/></svg>
<div class="b" style="left:366px;top:552.3px;width:14px;height:3.2px;background:linear-gradient(#f07050,#d83a20)"></div>
<svg style="left:387.9px;top:542.8px" width="20" height="23" viewBox="0 0 20 23"><rect x="6" y="8" width="5" height="6" fill="#c8dcf4" stroke="#6a90c8" stroke-width=".7"/><rect x="9" y="10.5" width="5" height="5.5" fill="#8ab0e8" stroke="#4a78c0" stroke-width=".7"/></svg>
<svg style="left:412.9px;top:542.8px" width="20" height="23" viewBox="0 0 20 23"><rect x="6" y="8" width="5" height="6" fill="none" stroke="#a8a8a8" stroke-width=".7"/><rect x="9" y="10.5" width="5" height="5.5" fill="#d8d8d8" stroke="#a8a8a8" stroke-width=".7"/></svg>
<div class="b" style="left:476px;top:72px;width:4px;height:498px;background:#7089a2"></div>
<div class="b" style="left:480px;top:72px;width:660px;height:498px;background:#f0f0f0"></div>
<div class="b" style="left:480px;top:72px;width:660px;height:1px;background:#283440"></div>
<div class="b" style="left:480px;top:72px;width:1px;height:498px;background:#283440"></div>
<div class="b" style="left:480px;top:569px;width:660px;height:1px;background:#3a4652"></div>
<div class="b" style="left:481px;top:73px;width:659px;height:14.3px;background:#fff"></div>
<div class="b" style="left:518px;top:73px;width:1px;height:14px;background:#e6e6e6"></div>
<div class="b" style="left:560.7px;top:73px;width:1px;height:14px;background:#e6e6e6"></div>
<div class="b" style="left:770.4px;top:73px;width:1px;height:14px;background:#e6e6e6"></div>
<div class="b" style="left:838.8px;top:73px;width:1px;height:14px;background:#e6e6e6"></div>
<div class="b" style="left:875.5px;top:73px;width:1px;height:14px;background:#e6e6e6"></div>
<div class="b" style="left:912.6px;top:73px;width:1px;height:14px;background:#e6e6e6"></div>
<div class="b" style="left:949.5px;top:73px;width:1px;height:14px;background:#e6e6e6"></div>
<div class="b" style="left:992.5px;top:73px;width:1px;height:14px;background:#e6e6e6"></div>
<div class="b" style="left:1044.3px;top:73px;width:1px;height:14px;background:#e6e6e6"></div>
<div class="b" style="left:1097.7px;top:73px;width:1px;height:14px;background:#e6e6e6"></div>
<div class="t" style="left:526.15px;top:77.00px;font-size:9px;color:#2a2a2a;letter-spacing:0.3px;transform:scaleX(0.859);">Line</div>
<div class="t" style="left:639.28px;top:77.00px;font-size:9px;color:#2a2a2a;letter-spacing:0.3px;transform:scaleX(0.865);">Description</div>
<div class="t" style="left:790.03px;top:77.00px;font-size:9px;color:#2a2a2a;letter-spacing:0.3px;transform:scaleX(0.889);">Type</div>
<div class="t" style="left:843.78px;top:77.00px;font-size:9px;color:#2a2a2a;letter-spacing:0.3px;transform:scaleX(0.855);">Size</div>
<div class="t" style="left:880.68px;top:77.00px;font-size:9px;color:#2a2a2a;letter-spacing:0.3px;transform:scaleX(0.855);">Size</div>
<div class="t" style="left:917.68px;top:77.00px;font-size:9px;color:#2a2a2a;letter-spacing:0.3px;transform:scaleX(0.855);">Size</div>
<div class="t" style="left:953.70px;top:77.00px;font-size:9px;color:#2a2a2a;letter-spacing:0.3px;transform:scaleX(0.963);">Quantity</div>
<div class="t" style="left:1002.01px;top:77.00px;font-size:9px;color:#2a2a2a;letter-spacing:0.3px;transform:scaleX(0.864);">Hours</div>
<div class="t" style="left:1057.19px;top:77.00px;font-size:9px;color:#2a2a2a;letter-spacing:0.3px;transform:scaleX(0.856);">Cost</div>
<div class="t" style="left:1099.65px;top:77.00px;font-size:9px;color:#2a2a2a;letter-spacing:0.3px;transform:scaleX(0.946);">Discount</div>
<div class="b" style="left:500px;top:87.3px;width:640px;height:13.600000000000001px;background:#ffffff"></div>
<div class="b" style="left:481px;top:87.3px;width:18px;height:13.600000000000001px;background:#fff"></div>
<div class="t" style="left:520.00px;top:91.00px;font-size:8.5px;color:#2c2c2c;letter-spacing:0.3px;transform:scaleX(0.847);">1</div>
<div class="t" style="left:563.00px;top:91.00px;font-size:8.5px;color:#2c2c2c;letter-spacing:0.3px;transform:scaleX(0.796);">YP21 SLDR OBTUSE ELBOW</div>
<div class="t" style="left:841.00px;top:91.00px;font-size:8.5px;color:#2c2c2c;letter-spacing:0.3px;transform:scaleX(0.821);">28</div>
<div class="t" style="left:878.00px;top:91.00px;font-size:8.5px;color:#2c2c2c;letter-spacing:0.3px;transform:scaleX(0.847);">0</div>
<div class="t" style="left:915.00px;top:91.00px;font-size:8.5px;color:#2c2c2c;letter-spacing:0.3px;transform:scaleX(0.847);">0</div>
<div class="t" style="left:975.72px;top:91.00px;font-size:8.5px;color:#2c2c2c;letter-spacing:0.3px;transform:scaleX(0.836);">3.00</div>
<div class="t" style="left:1023.61px;top:91.00px;font-size:8.5px;color:#2c2c2c;letter-spacing:0.3px;transform:scaleX(0.827);">0.310</div>
<div class="t" style="left:1080.92px;top:91.00px;font-size:8.5px;color:#2c2c2c;letter-spacing:0.3px;transform:scaleX(0.836);">5.21</div>
<div class="t" style="left:1112.83px;top:91.00px;font-size:8.5px;color:#2c2c2c;letter-spacing:0.3px;transform:scaleX(0.847);">-53.00</div>
<div class="b" style="left:500px;top:100.85px;width:640px;height:13.600000000000001px;background:#dddddd"></div>
<div class="b" style="left:481px;top:100.85px;width:18px;height:13.600000000000001px;background:#fff"></div>
<div class="t" style="left:520.00px;top:104.00px;font-size:8.5px;color:#2c2c2c;letter-spacing:0.3px;transform:scaleX(0.847);">2</div>
<div class="t" style="left:563.00px;top:104.00px;font-size:8.5px;color:#2c2c2c;letter-spacing:0.3px;transform:scaleX(0.796);">YP21 SLDR OBTUSE ELBOW</div>
<div class="t" style="left:841.00px;top:104.00px;font-size:8.5px;color:#2c2c2c;letter-spacing:0.3px;transform:scaleX(0.821);">35</div>
<div class="t" style="left:878.00px;top:104.00px;font-size:8.5px;color:#2c2c2c;letter-spacing:0.3px;transform:scaleX(0.847);">0</div>
<div class="t" style="left:915.00px;top:104.00px;font-size:8.5px;color:#2c2c2c;letter-spacing:0.3px;transform:scaleX(0.847);">0</div>
<div class="t" style="left:975.72px;top:104.00px;font-size:8.5px;color:#2c2c2c;letter-spacing:0.3px;transform:scaleX(0.836);">2.00</div>
<div class="t" style="left:1023.61px;top:104.00px;font-size:8.5px;color:#2c2c2c;letter-spacing:0.3px;transform:scaleX(0.827);">0.390</div>
<div class="t" style="left:1076.91px;top:104.00px;font-size:8.5px;color:#2c2c2c;letter-spacing:0.3px;transform:scaleX(0.827);">16.83</div>
<div class="t" style="left:1112.83px;top:104.00px;font-size:8.5px;color:#2c2c2c;letter-spacing:0.3px;transform:scaleX(0.847);">-53.00</div>
<div class="b" style="left:500px;top:114.4px;width:640px;height:13.600000000000001px;background:#ffffff"></div>
<div class="b" style="left:481px;top:114.4px;width:18px;height:13.600000000000001px;background:#fff"></div>
<div class="t" style="left:520.00px;top:118.00px;font-size:8.5px;color:#2c2c2c;letter-spacing:0.3px;transform:scaleX(0.847);">3</div>
<div class="t" style="left:563.00px;top:118.00px;font-size:8.5px;color:#2c2c2c;letter-spacing:0.3px;transform:scaleX(0.796);">YP21 SLDR OBTUSE ELBOW</div>
<div class="t" style="left:841.00px;top:118.00px;font-size:8.5px;color:#2c2c2c;letter-spacing:0.3px;transform:scaleX(0.821);">42</div>
<div class="t" style="left:878.00px;top:118.00px;font-size:8.5px;color:#2c2c2c;letter-spacing:0.3px;transform:scaleX(0.847);">0</div>
<div class="t" style="left:915.00px;top:118.00px;font-size:8.5px;color:#2c2c2c;letter-spacing:0.3px;transform:scaleX(0.847);">0</div>
<div class="t" style="left:975.72px;top:118.00px;font-size:8.5px;color:#2c2c2c;letter-spacing:0.3px;transform:scaleX(0.836);">1.00</div>
<div class="t" style="left:1023.61px;top:118.00px;font-size:8.5px;color:#2c2c2c;letter-spacing:0.3px;transform:scaleX(0.827);">0.470</div>
<div class="t" style="left:1076.91px;top:118.00px;font-size:8.5px;color:#2c2c2c;letter-spacing:0.3px;transform:scaleX(0.827);">29.98</div>
<div class="t" style="left:1112.83px;top:118.00px;font-size:8.5px;color:#2c2c2c;letter-spacing:0.3px;transform:scaleX(0.847);">-53.00</div>
<div class="b" style="left:500px;top:127.95px;width:640px;height:13.600000000000001px;background:#dddddd"></div>
<div class="b" style="left:481px;top:127.95px;width:18px;height:13.600000000000001px;background:#fff"></div>
<div class="t" style="left:520.00px;top:132.00px;font-size:8.5px;color:#2c2c2c;letter-spacing:0.3px;transform:scaleX(0.847);">4</div>
<div class="t" style="left:563.00px;top:132.00px;font-size:8.5px;color:#2c2c2c;letter-spacing:0.3px;transform:scaleX(0.792);">YP1 SLDR STRAIGHT COUPLING</div>
<div class="t" style="left:841.00px;top:132.00px;font-size:8.5px;color:#2c2c2c;letter-spacing:0.3px;transform:scaleX(0.821);">35</div>
<div class="t" style="left:878.00px;top:132.00px;font-size:8.5px;color:#2c2c2c;letter-spacing:0.3px;transform:scaleX(0.847);">0</div>
<div class="t" style="left:915.00px;top:132.00px;font-size:8.5px;color:#2c2c2c;letter-spacing:0.3px;transform:scaleX(0.847);">0</div>
<div class="t" style="left:975.72px;top:132.00px;font-size:8.5px;color:#2c2c2c;letter-spacing:0.3px;transform:scaleX(0.836);">1.00</div>
<div class="t" style="left:1023.61px;top:132.00px;font-size:8.5px;color:#2c2c2c;letter-spacing:0.3px;transform:scaleX(0.827);">0.390</div>
<div class="t" style="left:1080.92px;top:132.00px;font-size:8.5px;color:#2c2c2c;letter-spacing:0.3px;transform:scaleX(0.836);">5.21</div>
<div class="t" style="left:1112.83px;top:132.00px;font-size:8.5px;color:#2c2c2c;letter-spacing:0.3px;transform:scaleX(0.847);">-53.00</div>
<div class="b" style="left:500px;top:141.5px;width:640px;height:13.600000000000001px;background:#ffffff"></div>
<div class="b" style="left:481px;top:141.5px;width:18px;height:13.600000000000001px;background:#fff"></div>
<div class="t" style="left:520.00px;top:145.00px;font-size:8.5px;color:#2c2c2c;letter-spacing:0.3px;transform:scaleX(0.847);">5</div>
<div class="t" style="left:563.00px;top:145.00px;font-size:8.5px;color:#2c2c2c;letter-spacing:0.3px;transform:scaleX(0.792);">YP1 SLDR STRAIGHT COUPLING</div>
<div class="t" style="left:841.00px;top:145.00px;font-size:8.5px;color:#2c2c2c;letter-spacing:0.3px;transform:scaleX(0.821);">54</div>
<div class="t" style="left:878.00px;top:145.00px;font-size:8.5px;color:#2c2c2c;letter-spacing:0.3px;transform:scaleX(0.847);">0</div>
<div class="t" style="left:915.00px;top:145.00px;font-size:8.5px;color:#2c2c2c;letter-spacing:0.3px;transform:scaleX(0.847);">0</div>
<div class="t" style="left:975.72px;top:145.00px;font-size:8.5px;color:#2c2c2c;letter-spacing:0.3px;transform:scaleX(0.836);">5.00</div>
<div class="t" style="left:1023.61px;top:145.00px;font-size:8.5px;color:#2c2c2c;letter-spacing:0.3px;transform:scaleX(0.827);">0.600</div>
<div class="t" style="left:1076.91px;top:145.00px;font-size:8.5px;color:#2c2c2c;letter-spacing:0.3px;transform:scaleX(0.827);">16.05</div>
<div class="t" style="left:1112.83px;top:145.00px;font-size:8.5px;color:#2c2c2c;letter-spacing:0.3px;transform:scaleX(0.847);">-53.00</div>
<div class="b" style="left:500px;top:155.05px;width:640px;height:13.600000000000001px;background:#dddddd"></div>
<div class="b" style="left:481px;top:155.05px;width:18px;height:13.600000000000001px;background:#fff"></div>
<div class="t" style="left:520.00px;top:159.00px;font-size:8.5px;color:#2c2c2c;letter-spacing:0.3px;transform:scaleX(0.847);">6</div>
<div class="t" style="left:563.00px;top:159.00px;font-size:8.5px;color:#2c2c2c;letter-spacing:0.3px;transform:scaleX(0.804);">YP24 SLDR EQL TEE</div>
<div class="t" style="left:841.00px;top:159.00px;font-size:8.5px;color:#2c2c2c;letter-spacing:0.3px;transform:scaleX(0.821);">15</div>
<div class="t" style="left:878.00px;top:159.00px;font-size:8.5px;color:#2c2c2c;letter-spacing:0.3px;transform:scaleX(0.847);">0</div>
<div class="t" style="left:915.00px;top:159.00px;font-size:8.5px;color:#2c2c2c;letter-spacing:0.3px;transform:scaleX(0.847);">0</div>
<div class="t" style="left:975.72px;top:159.00px;font-size:8.5px;color:#2c2c2c;letter-spacing:0.3px;transform:scaleX(0.836);">5.00</div>
<div class="t" style="left:1023.61px;top:159.00px;font-size:8.5px;color:#2c2c2c;letter-spacing:0.3px;transform:scaleX(0.827);">0.200</div>
<div class="t" style="left:1080.92px;top:159.00px;font-size:8.5px;color:#2c2c2c;letter-spacing:0.3px;transform:scaleX(0.836);">0.82</div>
<div class="t" style="left:1112.83px;top:159.00px;font-size:8.5px;color:#2c2c2c;letter-spacing:0.3px;transform:scaleX(0.847);">-56.00</div>
<div class="b" style="left:500px;top:168.6px;width:640px;height:13.600000000000001px;background:#ffffff"></div>
<div class="b" style="left:481px;top:168.6px;width:18px;height:13.600000000000001px;background:#fff"></div>
<div class="t" style="left:520.00px;top:172.00px;font-size:8.5px;color:#2c2c2c;letter-spacing:0.3px;transform:scaleX(0.847);">7</div>
<div class="t" style="left:563.00px;top:172.00px;font-size:8.5px;color:#2c2c2c;letter-spacing:0.3px;transform:scaleX(0.804);">YP24 SLDR EQL TEE</div>
<div class="t" style="left:841.00px;top:172.00px;font-size:8.5px;color:#2c2c2c;letter-spacing:0.3px;transform:scaleX(0.821);">22</div>
<div class="t" style="left:878.00px;top:172.00px;font-size:8.5px;color:#2c2c2c;letter-spacing:0.3px;transform:scaleX(0.847);">0</div>
<div class="t" style="left:915.00px;top:172.00px;font-size:8.5px;color:#2c2c2c;letter-spacing:0.3px;transform:scaleX(0.847);">0</div>
<div class="t" style="left:975.72px;top:172.00px;font-size:8.5px;color:#2c2c2c;letter-spacing:0.3px;transform:scaleX(0.836);">4.00</div>
<div class="t" style="left:1023.61px;top:172.00px;font-size:8.5px;color:#2c2c2c;letter-spacing:0.3px;transform:scaleX(0.827);">0.290</div>
<div class="t" style="left:1080.92px;top:172.00px;font-size:8.5px;color:#2c2c2c;letter-spacing:0.3px;transform:scaleX(0.836);">2.61</div>
<div class="t" style="left:1112.83px;top:172.00px;font-size:8.5px;color:#2c2c2c;letter-spacing:0.3px;transform:scaleX(0.847);">-56.00</div>
<div class="b" style="left:500px;top:182.15px;width:640px;height:13.600000000000001px;background:#dddddd"></div>
<div class="b" style="left:481px;top:182.15px;width:18px;height:13.600000000000001px;background:#fff"></div>
<div class="t" style="left:520.00px;top:186.00px;font-size:8.5px;color:#2c2c2c;letter-spacing:0.3px;transform:scaleX(0.847);">8</div>
<div class="t" style="left:563.00px;top:186.00px;font-size:8.5px;color:#2c2c2c;letter-spacing:0.3px;transform:scaleX(0.804);">YP24 SLDR EQL TEE</div>
<div class="t" style="left:841.00px;top:186.00px;font-size:8.5px;color:#2c2c2c;letter-spacing:0.3px;transform:scaleX(0.821);">28</div>
<div class="t" style="left:878.00px;top:186.00px;font-size:8.5px;color:#2c2c2c;letter-spacing:0.3px;transform:scaleX(0.847);">0</div>
<div class="t" style="left:915.00px;top:186.00px;font-size:8.5px;color:#2c2c2c;letter-spacing:0.3px;transform:scaleX(0.847);">0</div>
<div class="t" style="left:975.72px;top:186.00px;font-size:8.5px;color:#2c2c2c;letter-spacing:0.3px;transform:scaleX(0.836);">7.00</div>
<div class="t" style="left:1023.61px;top:186.00px;font-size:8.5px;color:#2c2c2c;letter-spacing:0.3px;transform:scaleX(0.827);">0.370</div>
<div class="t" style="left:1080.92px;top:186.00px;font-size:8.5px;color:#2c2c2c;letter-spacing:0.3px;transform:scaleX(0.836);">6.87</div>
<div class="t" style="left:1112.83px;top:186.00px;font-size:8.5px;color:#2c2c2c;letter-spacing:0.3px;transform:scaleX(0.847);">-53.00</div>
<div class="b" style="left:500px;top:195.7px;width:640px;height:13.600000000000001px;background:#ffffff"></div>
<div class="b" style="left:481px;top:195.7px;width:18px;height:13.600000000000001px;background:#fff"></div>
<div class="t" style="left:520.00px;top:199.00px;font-size:8.5px;color:#2c2c2c;letter-spacing:0.3px;transform:scaleX(0.847);">9</div>
<div class="t" style="left:563.00px;top:199.00px;font-size:8.5px;color:#2c2c2c;letter-spacing:0.3px;transform:scaleX(0.806);">YP27 SLDR TEE END&amp;BRANCH RED</div>
<div class="t" style="left:841.00px;top:199.00px;font-size:8.5px;color:#2c2c2c;letter-spacing:0.3px;transform:scaleX(0.821);">35</div>
<div class="t" style="left:878.00px;top:199.00px;font-size:8.5px;color:#2c2c2c;letter-spacing:0.3px;transform:scaleX(0.821);">22</div>
<div class="t" style="left:915.00px;top:199.00px;font-size:8.5px;color:#2c2c2c;letter-spacing:0.3px;transform:scaleX(0.821);">22</div>
<div class="t" style="left:975.72px;top:199.00px;font-size:8.5px;color:#2c2c2c;letter-spacing:0.3px;transform:scaleX(0.836);">2.00</div>
<div class="t" style="left:1023.61px;top:199.00px;font-size:8.5px;color:#2c2c2c;letter-spacing:0.3px;transform:scaleX(0.827);">0.540</div>
<div class="t" style="left:1076.91px;top:199.00px;font-size:8.5px;color:#2c2c2c;letter-spacing:0.3px;transform:scaleX(0.827);">38.73</div>
<div class="t" style="left:1112.83px;top:199.00px;font-size:8.5px;color:#2c2c2c;letter-spacing:0.3px;transform:scaleX(0.847);">-53.00</div>
<div class="b" style="left:500px;top:209.25px;width:640px;height:13.600000000000001px;background:#dddddd"></div>
<div class="b" style="left:481px;top:209.25px;width:18px;height:13.600000000000001px;background:#fff"></div>
<div class="t" style="left:520.00px;top:213.00px;font-size:8.5px;color:#2c2c2c;letter-spacing:0.3px;transform:scaleX(0.821);">10</div>
<div class="t" style="left:563.00px;top:213.00px;font-size:8.5px;color:#2c2c2c;letter-spacing:0.3px;transform:scaleX(0.806);">YP27 SLDR TEE END&amp;BRANCH RED</div>
<div class="t" style="left:841.00px;top:213.00px;font-size:8.5px;color:#2c2c2c;letter-spacing:0.3px;transform:scaleX(0.821);">35</div>
<div class="t" style="left:878.00px;top:213.00px;font-size:8.5px;color:#2c2c2c;letter-spacing:0.3px;transform:scaleX(0.821);">28</div>
<div class="t" style="left:915.00px;top:213.00px;font-size:8.5px;color:#2c2c2c;letter-spacing:0.3px;transform:scaleX(0.821);">15</div>
<div class="t" style="left:975.72px;top:213.00px;font-size:8.5px;color:#2c2c2c;letter-spacing:0.3px;transform:scaleX(0.836);">1.00</div>
<div class="t" style="left:1023.61px;top:213.00px;font-size:8.5px;color:#2c2c2c;letter-spacing:0.3px;transform:scaleX(0.827);">0.540</div>
<div class="t" style="left:1076.91px;top:213.00px;font-size:8.5px;color:#2c2c2c;letter-spacing:0.3px;transform:scaleX(0.827);">30.96</div>
<div class="t" style="left:1112.83px;top:213.00px;font-size:8.5px;color:#2c2c2c;letter-spacing:0.3px;transform:scaleX(0.847);">-53.00</div>
<div class="b" style="left:500px;top:222.8px;width:640px;height:13.600000000000001px;background:#ffffff"></div>
<div class="b" style="left:481px;top:222.8px;width:18px;height:13.600000000000001px;background:#fff"></div>
<div class="t" style="left:520.00px;top:226.00px;font-size:8.5px;color:#2c2c2c;letter-spacing:0.3px;transform:scaleX(0.878);">11</div>
<div class="t" style="left:563.00px;top:226.00px;font-size:8.5px;color:#2c2c2c;letter-spacing:0.3px;transform:scaleX(0.806);">YP27 SLDR TEE END&amp;BRANCH RED</div>
<div class="t" style="left:841.00px;top:226.00px;font-size:8.5px;color:#2c2c2c;letter-spacing:0.3px;transform:scaleX(0.821);">35</div>
<div class="t" style="left:878.00px;top:226.00px;font-size:8.5px;color:#2c2c2c;letter-spacing:0.3px;transform:scaleX(0.821);">28</div>
<div class="t" style="left:915.00px;top:226.00px;font-size:8.5px;color:#2c2c2c;letter-spacing:0.3px;transform:scaleX(0.821);">22</div>
<div class="t" style="left:975.72px;top:226.00px;font-size:8.5px;color:#2c2c2c;letter-spacing:0.3px;transform:scaleX(0.836);">1.00</div>
<div class="t" style="left:1023.61px;top:226.00px;font-size:8.5px;color:#2c2c2c;letter-spacing:0.3px;transform:scaleX(0.827);">0.540</div>
<div class="t" style="left:1076.91px;top:226.00px;font-size:8.5px;color:#2c2c2c;letter-spacing:0.3px;transform:scaleX(0.827);">26.78</div>
<div class="t" style="left:1112.83px;top:226.00px;font-size:8.5px;color:#2c2c2c;letter-spacing:0.3px;transform:scaleX(0.847);">-53.00</div>
<div class="b" style="left:500px;top:236.35px;width:640px;height:13.600000000000001px;background:#dddddd"></div>
<div class="b" style="left:481px;top:236.35px;width:18px;height:13.600000000000001px;background:#fff"></div>
<div class="t" style="left:520.00px;top:240.00px;font-size:8.5px;color:#862e40;letter-spacing:0.3px;transform:scaleX(0.821);">12</div>
<div class="t" style="left:563.00px;top:240.00px;font-size:8.5px;color:#862e40;letter-spacing:0.3px;transform:scaleX(0.815);">15-28 COPPER PIPE &amp; HANGER YP</div>
<div class="t" style="left:773.00px;top:240.00px;font-size:8.5px;color:#862e40;letter-spacing:0.3px;transform:scaleX(0.870);">Composite</div>
<div class="t" style="left:841.00px;top:240.00px;font-size:8.5px;color:#862e40;letter-spacing:0.3px;transform:scaleX(0.821);">15</div>
<div class="t" style="left:878.00px;top:240.00px;font-size:8.5px;color:#862e40;letter-spacing:0.3px;transform:scaleX(0.847);">0</div>
<div class="t" style="left:915.00px;top:240.00px;font-size:8.5px;color:#862e40;letter-spacing:0.3px;transform:scaleX(0.847);">0</div>
<div class="t" style="left:967.71px;top:240.00px;font-size:8.5px;color:#862e40;letter-spacing:0.3px;transform:scaleX(0.822);">200.00</div>
<div class="t" style="left:1023.61px;top:240.00px;font-size:8.5px;color:#862e40;letter-spacing:0.3px;transform:scaleX(0.827);">0.260</div>
<div class="t" style="left:1080.92px;top:240.00px;font-size:8.5px;color:#862e40;letter-spacing:0.3px;transform:scaleX(0.836);">2.58</div>
<div class="b" style="left:500px;top:249.9px;width:640px;height:13.600000000000001px;background:#ffffff"></div>
<div class="b" style="left:481px;top:249.9px;width:18px;height:13.600000000000001px;background:#fff"></div>
<div class="t" style="left:520.00px;top:254.00px;font-size:8.5px;color:#862e40;letter-spacing:0.3px;transform:scaleX(0.821);">13</div>
<div class="t" style="left:563.00px;top:254.00px;font-size:8.5px;color:#862e40;letter-spacing:0.3px;transform:scaleX(0.815);">15-28 COPPER PIPE &amp; HANGER YP</div>
<div class="t" style="left:773.00px;top:254.00px;font-size:8.5px;color:#862e40;letter-spacing:0.3px;transform:scaleX(0.870);">Composite</div>
<div class="t" style="left:841.00px;top:254.00px;font-size:8.5px;color:#862e40;letter-spacing:0.3px;transform:scaleX(0.821);">22</div>
<div class="t" style="left:878.00px;top:254.00px;font-size:8.5px;color:#862e40;letter-spacing:0.3px;transform:scaleX(0.847);">0</div>
<div class="t" style="left:915.00px;top:254.00px;font-size:8.5px;color:#862e40;letter-spacing:0.3px;transform:scaleX(0.847);">0</div>
<div class="t" style="left:967.71px;top:254.00px;font-size:8.5px;color:#862e40;letter-spacing:0.3px;transform:scaleX(0.822);">145.00</div>
<div class="t" style="left:1023.61px;top:254.00px;font-size:8.5px;color:#862e40;letter-spacing:0.3px;transform:scaleX(0.827);">0.280</div>
<div class="t" style="left:1080.92px;top:254.00px;font-size:8.5px;color:#862e40;letter-spacing:0.3px;transform:scaleX(0.836);">4.36</div>
<div class="b" style="left:500px;top:263.45px;width:640px;height:13.600000000000001px;background:#dddddd"></div>
<div class="b" style="left:481px;top:263.45px;width:18px;height:13.600000000000001px;background:#fff"></div>
<div class="t" style="left:520.00px;top:267.00px;font-size:8.5px;color:#862e40;letter-spacing:0.3px;transform:scaleX(0.821);">14</div>
<div class="t" style="left:563.00px;top:267.00px;font-size:8.5px;color:#862e40;letter-spacing:0.3px;transform:scaleX(0.815);">15-28 COPPER PIPE &amp; HANGER YP</div>
<div class="t" style="left:773.00px;top:267.00px;font-size:8.5px;color:#862e40;letter-spacing:0.3px;transform:scaleX(0.870);">Composite</div>
<div class="t" style="left:841.00px;top:267.00px;font-size:8.5px;color:#862e40;letter-spacing:0.3px;transform:scaleX(0.821);">28</div>
<div class="t" style="left:878.00px;top:267.00px;font-size:8.5px;color:#862e40;letter-spacing:0.3px;transform:scaleX(0.847);">0</div>
<div class="t" style="left:915.00px;top:267.00px;font-size:8.5px;color:#862e40;letter-spacing:0.3px;transform:scaleX(0.847);">0</div>
<div class="t" style="left:971.71px;top:267.00px;font-size:8.5px;color:#862e40;letter-spacing:0.3px;transform:scaleX(0.827);">76.00</div>
<div class="t" style="left:1023.61px;top:267.00px;font-size:8.5px;color:#862e40;letter-spacing:0.3px;transform:scaleX(0.827);">0.300</div>
<div class="t" style="left:1080.92px;top:267.00px;font-size:8.5px;color:#862e40;letter-spacing:0.3px;transform:scaleX(0.836);">5.52</div>
<div class="b" style="left:500px;top:277.0px;width:640px;height:13.600000000000001px;background:#ffffff"></div>
<div class="b" style="left:481px;top:277.0px;width:18px;height:13.600000000000001px;background:#fff"></div>
<div class="t" style="left:520.00px;top:281.00px;font-size:8.5px;color:#862e40;letter-spacing:0.3px;transform:scaleX(0.821);">15</div>
<div class="t" style="left:563.00px;top:281.00px;font-size:8.5px;color:#862e40;letter-spacing:0.3px;transform:scaleX(0.809);">RADIATOR VALVE SET CU</div>
<div class="t" style="left:773.00px;top:281.00px;font-size:8.5px;color:#862e40;letter-spacing:0.3px;transform:scaleX(0.870);">Composite</div>
<div class="t" style="left:841.00px;top:281.00px;font-size:8.5px;color:#862e40;letter-spacing:0.3px;transform:scaleX(0.821);">15</div>
<div class="t" style="left:878.00px;top:281.00px;font-size:8.5px;color:#862e40;letter-spacing:0.3px;transform:scaleX(0.847);">0</div>
<div class="t" style="left:915.00px;top:281.00px;font-size:8.5px;color:#862e40;letter-spacing:0.3px;transform:scaleX(0.847);">0</div>
<div class="t" style="left:971.71px;top:281.00px;font-size:8.5px;color:#862e40;letter-spacing:0.3px;transform:scaleX(0.827);">10.00</div>
<div class="t" style="left:1023.61px;top:281.00px;font-size:8.5px;color:#862e40;letter-spacing:0.3px;transform:scaleX(0.827);">1.500</div>
<div class="t" style="left:1076.91px;top:281.00px;font-size:8.5px;color:#862e40;letter-spacing:0.3px;transform:scaleX(0.827);">52.77</div>
<div class="b" style="left:500px;top:290.55px;width:640px;height:13.600000000000001px;background:#dddddd"></div>
<div class="b" style="left:481px;top:290.55px;width:18px;height:13.600000000000001px;background:#fff"></div>
<div class="t" style="left:520.00px;top:294.00px;font-size:8.5px;color:#862e40;letter-spacing:0.3px;transform:scaleX(0.821);">16</div>
<div class="t" style="left:563.00px;top:294.00px;font-size:8.5px;color:#862e40;letter-spacing:0.3px;transform:scaleX(0.812);">SINK INST+BLENDG VLV  (SOLDER)</div>
<div class="t" style="left:773.00px;top:294.00px;font-size:8.5px;color:#862e40;letter-spacing:0.3px;transform:scaleX(0.870);">Composite</div>
<div class="t" style="left:841.00px;top:294.00px;font-size:8.5px;color:#862e40;letter-spacing:0.3px;transform:scaleX(0.821);">15</div>
<div class="t" style="left:878.00px;top:294.00px;font-size:8.5px;color:#862e40;letter-spacing:0.3px;transform:scaleX(0.847);">0</div>
<div class="t" style="left:915.00px;top:294.00px;font-size:8.5px;color:#862e40;letter-spacing:0.3px;transform:scaleX(0.847);">0</div>
<div class="t" style="left:975.72px;top:294.00px;font-size:8.5px;color:#862e40;letter-spacing:0.3px;transform:scaleX(0.836);">5.00</div>
<div class="t" style="left:1023.61px;top:294.00px;font-size:8.5px;color:#862e40;letter-spacing:0.3px;transform:scaleX(0.827);">3.000</div>
<div class="t" style="left:1072.91px;top:294.00px;font-size:8.5px;color:#862e40;letter-spacing:0.3px;transform:scaleX(0.841);">118.26</div>
<div class="b" style="left:500px;top:304.1px;width:640px;height:13.600000000000001px;background:#ffffff"></div>
<div class="b" style="left:481px;top:304.1px;width:18px;height:13.600000000000001px;background:#fff"></div>
<div class="t" style="left:520.00px;top:308.00px;font-size:8.5px;color:#862e40;letter-spacing:0.3px;transform:scaleX(0.821);">17</div>
<div class="t" style="left:563.00px;top:308.00px;font-size:8.5px;color:#862e40;letter-spacing:0.3px;transform:scaleX(0.804);">WC MODULE t1</div>
<div class="t" style="left:773.00px;top:308.00px;font-size:8.5px;color:#862e40;letter-spacing:0.3px;transform:scaleX(0.870);">Composite</div>
<div class="t" style="left:841.00px;top:308.00px;font-size:8.5px;color:#862e40;letter-spacing:0.3px;transform:scaleX(0.847);">0</div>
<div class="t" style="left:878.00px;top:308.00px;font-size:8.5px;color:#862e40;letter-spacing:0.3px;transform:scaleX(0.847);">0</div>
<div class="t" style="left:915.00px;top:308.00px;font-size:8.5px;color:#862e40;letter-spacing:0.3px;transform:scaleX(0.847);">0</div>
<div class="t" style="left:975.72px;top:308.00px;font-size:8.5px;color:#862e40;letter-spacing:0.3px;transform:scaleX(0.836);">5.00</div>
<div class="t" style="left:1023.61px;top:308.00px;font-size:8.5px;color:#862e40;letter-spacing:0.3px;transform:scaleX(0.827);">3.000</div>
<div class="t" style="left:1072.91px;top:308.00px;font-size:8.5px;color:#862e40;letter-spacing:0.3px;transform:scaleX(0.822);">107.42</div>
<div class="b" style="left:500px;top:317.65px;width:640px;height:13.600000000000001px;background:#dddddd"></div>
<div class="b" style="left:481px;top:317.65px;width:18px;height:13.600000000000001px;background:#fff"></div>
<div class="t" style="left:520.00px;top:321.00px;font-size:8.5px;color:#2c2c2c;letter-spacing:0.3px;transform:scaleX(0.821);">18</div>
<div class="t" style="left:563.00px;top:321.00px;font-size:8.5px;color:#2c2c2c;letter-spacing:0.3px;transform:scaleX(0.810);">CRANE D 116 BRNZ CHECK VALVE</div>
<div class="t" style="left:841.00px;top:321.00px;font-size:8.5px;color:#2c2c2c;letter-spacing:0.3px;transform:scaleX(0.821);">25</div>
<div class="t" style="left:878.00px;top:321.00px;font-size:8.5px;color:#2c2c2c;letter-spacing:0.3px;transform:scaleX(0.847);">0</div>
<div class="t" style="left:915.00px;top:321.00px;font-size:8.5px;color:#2c2c2c;letter-spacing:0.3px;transform:scaleX(0.847);">0</div>
<div class="t" style="left:975.72px;top:321.00px;font-size:8.5px;color:#2c2c2c;letter-spacing:0.3px;transform:scaleX(0.836);">2.00</div>
<div class="t" style="left:1023.61px;top:321.00px;font-size:8.5px;color:#2c2c2c;letter-spacing:0.3px;transform:scaleX(0.827);">0.450</div>
<div class="t" style="left:1076.91px;top:321.00px;font-size:8.5px;color:#2c2c2c;letter-spacing:0.3px;transform:scaleX(0.827);">36.19</div>
<div class="t" style="left:1112.83px;top:321.00px;font-size:8.5px;color:#2c2c2c;letter-spacing:0.3px;transform:scaleX(0.847);">-73.75</div>
<div class="b" style="left:500px;top:331.2px;width:640px;height:13.600000000000001px;background:#ffffff"></div>
<div class="b" style="left:481px;top:331.2px;width:18px;height:13.600000000000001px;background:#fff"></div>
<div class="t" style="left:520.00px;top:335.00px;font-size:8.5px;color:#2c2c2c;letter-spacing:0.3px;transform:scaleX(0.821);">19</div>
<div class="t" style="left:563.00px;top:335.00px;font-size:8.5px;color:#2c2c2c;letter-spacing:0.3px;transform:scaleX(0.810);">CRANE D 116 BRNZ CHECK VALVE</div>
<div class="t" style="left:841.00px;top:335.00px;font-size:8.5px;color:#2c2c2c;letter-spacing:0.3px;transform:scaleX(0.821);">32</div>
<div class="t" style="left:878.00px;top:335.00px;font-size:8.5px;color:#2c2c2c;letter-spacing:0.3px;transform:scaleX(0.847);">0</div>
<div class="t" style="left:915.00px;top:335.00px;font-size:8.5px;color:#2c2c2c;letter-spacing:0.3px;transform:scaleX(0.847);">0</div>
<div class="t" style="left:975.72px;top:335.00px;font-size:8.5px;color:#2c2c2c;letter-spacing:0.3px;transform:scaleX(0.836);">2.00</div>
<div class="t" style="left:1023.61px;top:335.00px;font-size:8.5px;color:#2c2c2c;letter-spacing:0.3px;transform:scaleX(0.827);">0.560</div>
<div class="t" style="left:1076.91px;top:335.00px;font-size:8.5px;color:#2c2c2c;letter-spacing:0.3px;transform:scaleX(0.827);">53.50</div>
<div class="t" style="left:1112.83px;top:335.00px;font-size:8.5px;color:#2c2c2c;letter-spacing:0.3px;transform:scaleX(0.847);">-73.75</div>
<div class="b" style="left:500px;top:344.75px;width:640px;height:13.600000000000001px;background:#dddddd"></div>
<div class="b" style="left:481px;top:344.75px;width:18px;height:13.600000000000001px;background:#fff"></div>
<div class="t" style="left:520.00px;top:348.00px;font-size:8.5px;color:#8b3a8b;letter-spacing:0.3px;transform:scaleX(0.821);">20</div>
<div class="t" style="left:563.00px;top:348.00px;font-size:8.5px;color:#8b3a8b;letter-spacing:0.3px;transform:scaleX(0.852);">RCD Special Valve 1</div>
<div class="t" style="left:773.00px;top:348.00px;font-size:8.5px;color:#8b3a8b;letter-spacing:0.3px;transform:scaleX(0.810);">M1</div>
<div class="t" style="left:841.00px;top:348.00px;font-size:8.5px;color:#8b3a8b;letter-spacing:0.3px;transform:scaleX(0.847);">0</div>
<div class="t" style="left:878.00px;top:348.00px;font-size:8.5px;color:#8b3a8b;letter-spacing:0.3px;transform:scaleX(0.847);">0</div>
<div class="t" style="left:915.00px;top:348.00px;font-size:8.5px;color:#8b3a8b;letter-spacing:0.3px;transform:scaleX(0.847);">0</div>
<div class="t" style="left:975.72px;top:348.00px;font-size:8.5px;color:#8b3a8b;letter-spacing:0.3px;transform:scaleX(0.836);">3.00</div>
<div class="t" style="left:1023.61px;top:348.00px;font-size:8.5px;color:#8b3a8b;letter-spacing:0.3px;transform:scaleX(0.827);">0.500</div>
<div class="t" style="left:1076.91px;top:348.00px;font-size:8.5px;color:#8b3a8b;letter-spacing:0.3px;transform:scaleX(0.827);">50.00</div>
<div class="b" style="left:500px;top:358.3px;width:640px;height:13.600000000000001px;background:#ffffff"></div>
<div class="b" style="left:481px;top:358.3px;width:18px;height:13.600000000000001px;background:#fff"></div>
<div class="t" style="left:520.00px;top:362.00px;font-size:8.5px;color:#8b3a8b;letter-spacing:0.3px;transform:scaleX(0.821);">21</div>
<div class="t" style="left:563.00px;top:362.00px;font-size:8.5px;color:#8b3a8b;letter-spacing:0.3px;transform:scaleX(0.852);">RCD Special Valve 2</div>
<div class="t" style="left:773.00px;top:362.00px;font-size:8.5px;color:#8b3a8b;letter-spacing:0.3px;transform:scaleX(0.810);">M1</div>
<div class="t" style="left:841.00px;top:362.00px;font-size:8.5px;color:#8b3a8b;letter-spacing:0.3px;transform:scaleX(0.847);">0</div>
<div class="t" style="left:878.00px;top:362.00px;font-size:8.5px;color:#8b3a8b;letter-spacing:0.3px;transform:scaleX(0.847);">0</div>
<div class="t" style="left:915.00px;top:362.00px;font-size:8.5px;color:#8b3a8b;letter-spacing:0.3px;transform:scaleX(0.847);">0</div>
<div class="t" style="left:975.72px;top:362.00px;font-size:8.5px;color:#8b3a8b;letter-spacing:0.3px;transform:scaleX(0.836);">2.00</div>
<div class="t" style="left:1023.61px;top:362.00px;font-size:8.5px;color:#8b3a8b;letter-spacing:0.3px;transform:scaleX(0.827);">0.330</div>
<div class="t" style="left:1080.92px;top:362.00px;font-size:8.5px;color:#8b3a8b;letter-spacing:0.3px;transform:scaleX(0.836);">0.00</div>
<div class="b" style="left:481px;top:100px;width:18px;height:1px;background:#e2e2e2"></div>
<div class="b" style="left:481px;top:114px;width:18px;height:1px;background:#e2e2e2"></div>
<div class="b" style="left:481px;top:127px;width:18px;height:1px;background:#e2e2e2"></div>
<div class="b" style="left:481px;top:141px;width:18px;height:1px;background:#e2e2e2"></div>
<div class="b" style="left:481px;top:155px;width:18px;height:1px;background:#e2e2e2"></div>
<div class="b" style="left:481px;top:168px;width:18px;height:1px;background:#e2e2e2"></div>
<div class="b" style="left:481px;top:182px;width:18px;height:1px;background:#e2e2e2"></div>
<div class="b" style="left:481px;top:195px;width:18px;height:1px;background:#e2e2e2"></div>
<div class="b" style="left:481px;top:209px;width:18px;height:1px;background:#e2e2e2"></div>
<div class="b" style="left:481px;top:222px;width:18px;height:1px;background:#e2e2e2"></div>
<div class="b" style="left:481px;top:236px;width:18px;height:1px;background:#e2e2e2"></div>
<div class="b" style="left:481px;top:249px;width:18px;height:1px;background:#e2e2e2"></div>
<div class="b" style="left:481px;top:263px;width:18px;height:1px;background:#e2e2e2"></div>
<div class="b" style="left:481px;top:276px;width:18px;height:1px;background:#e2e2e2"></div>
<div class="b" style="left:481px;top:290px;width:18px;height:1px;background:#e2e2e2"></div>
<div class="b" style="left:481px;top:304px;width:18px;height:1px;background:#e2e2e2"></div>
<div class="b" style="left:481px;top:317px;width:18px;height:1px;background:#e2e2e2"></div>
<div class="b" style="left:481px;top:331px;width:18px;height:1px;background:#e2e2e2"></div>
<div class="b" style="left:481px;top:344px;width:18px;height:1px;background:#e2e2e2"></div>
<div class="b" style="left:481px;top:358px;width:18px;height:1px;background:#e2e2e2"></div>
<div class="b" style="left:481px;top:371px;width:18px;height:1px;background:#e2e2e2"></div>
<div class="b" style="left:481px;top:87px;width:659px;height:1px;background:#a8a8a8"></div>
<div class="b" style="left:499px;top:73px;width:1px;height:299px;background:#9a9a9a"></div>
<svg style="left:484px;top:363px" width="6" height="7" viewBox="0 0 6 7"><path d="M1 0.5L5 3.5L1 6.5Z" fill="#222"/></svg>
<svg style="left:503px;top:359.5px" width="12" height="11" viewBox="0 0 12 11"><path d="M6 0.8L11.3 10.3H0.7Z" fill="#f0b020" stroke="#c88a10" stroke-width=".6"/><rect x="5.4" y="3.8" width="1.2" height="3.6" fill="#5a3a00"/><rect x="5.4" y="8.2" width="1.2" height="1.2" fill="#5a3a00"/></svg>
<div class="b" style="left:481px;top:559.5px;width:659px;height:9.5px;background:#f0f0f0"></div>
<div class="b" style="left:491px;top:560px;width:563px;height:8px;background:#cdcdcd"></div>
<svg style="left:483px;top:560px" width="6" height="8" viewBox="0 0 6 8"><path d="M4.5 1L1.5 4L4.5 7" fill="none" stroke="#555" stroke-width="1.2"/></svg>
<div class="b" style="left:-2px;top:606px;width:62px;height:25px;background:#e1e1e1;border:1px solid #cfcfcf"></div>
<div class="t" style="left:0.00px;top:615.00px;font-size:9px;color:#e8902c;font-weight:bold;transform:scaleX(1.113);">Import PDF</div>
<div class="b" style="left:65.7px;top:606px;width:46.3px;height:25px;background:#e1e1e1;border:1px solid #cfcfcf"></div>
<div class="t" style="left:77.42px;top:609.00px;font-size:8.5px;color:#3a3a3a;letter-spacing:0.3px;transform:scaleX(0.861);">Stored</div>
<div class="t" style="left:78.09px;top:620.00px;font-size:8.5px;color:#3a3a3a;letter-spacing:0.3px;transform:scaleX(0.857);">Prices</div>
<div class="b" style="left:117.9px;top:606px;width:51.1px;height:25px;background:#e1e1e1;border:1px solid #cfcfcf"></div>
<div class="t" style="left:131.13px;top:609.00px;font-size:8.5px;color:#3a3a3a;letter-spacing:0.3px;transform:scaleX(0.876);">Amend</div>
<div class="t" style="left:131.43px;top:620.00px;font-size:8.5px;color:#3a3a3a;letter-spacing:0.3px;transform:scaleX(0.875);">Descs.</div>
<div class="t" style="left:949.50px;top:584.00px;font-size:8.5px;color:#1b2a42;letter-spacing:0.3px;transform:scaleX(0.907);">Totals</div>
<div class="b" style="left:991.3px;top:580.6px;width:105px;height:14.7px;background:#f0f0f0"></div>
<div class="b" style="left:1044px;top:580.6px;width:0.7px;height:14.7px;background:#d8d8d8"></div>
<div class="t" style="left:1015.70px;top:584.00px;font-size:8.5px;color:#8c8c8c;letter-spacing:0.3px;transform:scaleX(0.818);">177.060</div>
<div class="t" style="left:1067.90px;top:584.00px;font-size:8.5px;color:#8c8c8c;letter-spacing:0.3px;transform:scaleX(0.818);">3915.76</div>
<div class="b" style="left:985.7px;top:606.4px;width:51.9px;height:24.2px;background:#e1e1e1;border:1px solid #d0d0d0"></div>
<div class="b" style="left:1042.3px;top:606.4px;width:52.3px;height:24.2px;background:#e1e1e1;border:1px solid #d0d0d0"></div>
<div class="b" style="left:1099.4px;top:606.4px;width:45px;height:24.2px;background:#e1e1e1;border:1px solid #d0d0d0"></div>
<div class="t" style="left:1002.96px;top:615.00px;font-size:8.5px;color:#2a2a2a;letter-spacing:0.3px;transform:scaleX(0.863);">Back</div>
<div class="t" style="left:1052.88px;top:615.00px;font-size:8.5px;color:#2a2a2a;letter-spacing:0.3px;transform:scaleX(0.865);">Continue</div>
<div class="t" style="left:1119.18px;top:615.00px;font-size:8.5px;color:#2a2a2a;letter-spacing:0.3px;transform:scaleX(0.839);">Exit</div>
</body></html>
